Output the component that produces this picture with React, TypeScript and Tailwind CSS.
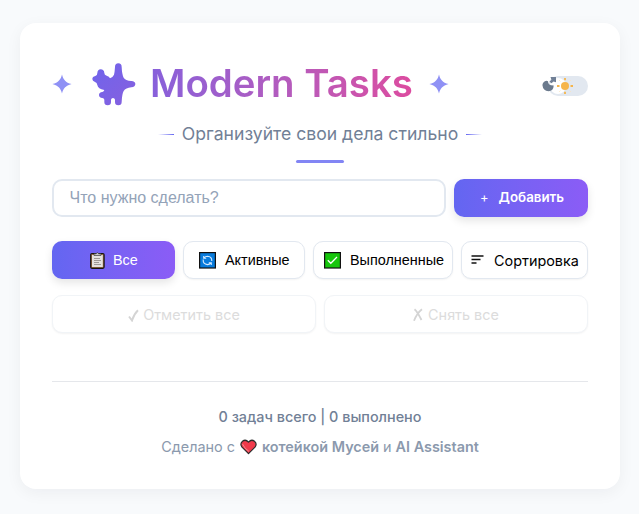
import React from 'react';

const outline = 'h-[38px] rounded-[10px] border border-[#e2e8f0] bg-white shadow-[0_1px_2px_rgba(0,0,0,0.05)] flex items-center';

function Star() {
  return (
    <svg className="h-5 w-5 shrink-0" viewBox="0 0 20 20" fill="#8f91f5">
      <path d="M10 .4C11.2 5.4 13.5 8.4 19.6 10C13.5 11.6 11.2 14.6 10 19.6C8.8 14.6 6.5 11.6 .4 10C6.5 8.4 8.8 5.4 10 .4Z" />
    </svg>
  );
}

function Sparkles() {
  return (
    <svg className="h-[43px] w-11 shrink-0" viewBox="156 38 132 129">
      <defs>
        <linearGradient id="sparkle" x1="156" y1="38" x2="288" y2="167" gradientUnits="userSpaceOnUse">
          <stop stopColor="#6f64ec" />
          <stop offset="1" stopColor="#8760de" />
        </linearGradient>
      </defs>
      <path
        fill="url(#sparkle)"
        d="M225 50Q225 39 235 39Q245 39 245 50Q246 73 251 82Q256 90 274 92Q286 93 286 101Q286 110 274 111Q257 113 251 122Q246 131 245 155Q245 165 235 165Q225 165 225 155V148Q224 143 219 143Q214 143 213 148V155Q213 165 203 165Q193 165 193 155V148Q192 144 187 143Q177 142 177 134Q177 126 187 125Q192 124 193 119Q183 118 178 114Q173 110 172 104Q171 97 165 95Q157 92 157 86Q157 79 166 77Q172 76 172 68Q173 57 182 57Q192 57 193 68Q193 75 200 76Q208 78 210 84Q219 80 222 73Q224 66 225 50Z"
      />
    </svg>
  );
}

function ThemeToggle() {
  return (
    <svg className="h-5 w-[46px]" viewBox="0 0 46 20">
      <rect x="6" width="40" height="20" rx="10" fill="#e2e8f0" />
      <circle cx="16" cy="10" r="8" fill="#fff" />
      <path d="M.4 9Q.8 5.5 4.5 4.8L6 5.2Q6.2 8.5 9 9.2L11.7 9.4Q11.5 14.9 6.5 15.2Q1 14.8 .4 9Z" fill="#6b7a8d" />
      <path d="M8.5 1H14V6.2L11.5 5.5L9.5 7.2L7.5 5.7L9.4 3.8Z" fill="#718096" />
      <circle cx="23" cy="10" r="4" fill="#f6b54b" />
      <path d="M23 2v2.2M23 15.8V18M15 10h2.5M28.5 10H31" stroke="#f6b54b" strokeWidth="1.8" />
      <path d="M17.3 4.3l1 1M27.7 14.7l1 1M17.3 15.7l1-1M27.7 5.3l1-1" stroke="#fce5bd" strokeWidth="1" />
    </svg>
  );
}

function Clipboard() {
  return (
    <svg className="h-[17px] w-[15px] shrink-0" viewBox="0 0 15 17">
      <rect x=".7" y="1.5" width="13.4" height="14.8" rx="1.2" fill="#9a6a42" stroke="#151515" strokeWidth="1.2" />
      <rect x="2" y="3" width="10.8" height="12" fill="#e4e2df" />
      <path d="M4 3.5V1.8H6Q7.4-.5 8.8 1.8H11V3.5Z" fill="#c9c9c9" stroke="#252525" strokeWidth=".6" />
      <path d="M4 6.5h6M4 8.5h7M4 10.5h5M4 12.5h7" stroke="#8b8784" strokeWidth=".8" />
    </svg>
  );
}

function Refresh() {
  return (
    <svg className="h-[17px] w-[17px] shrink-0" viewBox="0 0 17 17">
      <rect x=".6" y=".6" width="15.8" height="15.4" fill="#087bdc" stroke="#111" strokeWidth="1.2" />
      <path d="M4.2 7.5Q3.8 12.4 8.5 12.6Q10.5 12.6 12 11M9.8 10.7h2.5v2.3M12.8 9Q13 4.4 8.5 4.2Q6.5 4.2 5 5.8M7.2 6.2H4.7V3.9" fill="none" stroke="#d5eaff" strokeWidth="1.1" />
    </svg>
  );
}

function Check() {
  return (
    <svg className="h-[17px] w-[17px] shrink-0" viewBox="0 0 17 17">
      <rect x=".6" y=".6" width="15.8" height="15.4" fill="#16c60c" stroke="#111" strokeWidth="1.2" />
      <path d="M3.8 8.3l3 3L13 5" fill="none" stroke="#fff" strokeWidth="1.3" />
    </svg>
  );
}

function Heart() {
  return (
    <svg className="mx-[5px] h-4 w-[17px] shrink-0" viewBox="0 0 17 16">
      <path d="M8.5 14.6L2 8.1C-1.2 3.8 4.5-1.4 8.5 3.2C12.5-1.4 18.2 3.8 15 8.1Z" fill="#f03a4b" stroke="#2b2b2b" strokeWidth="1.2" strokeLinejoin="round" />
      <path d="M2.5 5Q4 9 9 12.5" fill="none" stroke="#f48b91" strokeWidth="1" />
    </svg>
  );
}

export default function App() {
  return (
    <main className="h-[514px] w-[639px] bg-[#f8fafc] pt-[23px] pl-5 font-['Inter',sans-serif] text-[#718096]">
      <section className="flex h-[466px] w-[600px] flex-col rounded-2xl bg-white px-8 shadow-[0_4px_16px_rgba(15,23,42,0.05)]">
        <header className="mt-9 flex h-[50px] shrink-0 items-center">
          <Star />
          <div className="ml-5"><Sparkles /></div>
          <h1 className="mb-[2px] ml-[14px] w-[265px] bg-linear-to-r from-[#8760db] to-[#dd4b9f] bg-clip-text text-[38.4px] leading-[50px] font-semibold whitespace-nowrap text-transparent">Modern Tasks</h1>
          <div className="ml-[14px]"><Star /></div>
          <div className="mt-1 ml-auto"><ThemeToggle /></div>
        </header>
        <div className="mt-3 flex h-[26px] shrink-0 items-center justify-center">
          <span className="h-px w-4 bg-linear-to-r from-transparent to-[#6366f1]" />
          <p className="mx-2 text-[17.6px] whitespace-nowrap">Организуйте свои дела стильно</p>
          <span className="h-px w-4 bg-linear-to-r from-[#6366f1] to-transparent" />
        </div>
        <div className="mx-auto mt-[13px] h-[3px] w-12 shrink-0 rounded-sm bg-[#8285f4]" />
        <div className="mt-4 flex h-[38px] shrink-0 gap-2">
          <div className="flex w-[394px] items-center rounded-[10px] border-2 border-[#e2e8f0] pl-[15.5px] font-['Liberation_Sans',sans-serif] text-base text-[#94a3b8]">Что нужно сделать?</div>
          <button className="flex w-[134px] items-center rounded-[10px] bg-linear-to-r from-[#6366f1] to-[#8b5cf6] pl-[26px] text-[13.33px] font-semibold text-white shadow-[0_4px_8px_rgba(0,0,0,0.1)]"><span className="mr-[10px] text-[13px] font-normal">+</span>Добавить</button>
        </div>
        <nav className="mt-6 flex shrink-0 gap-2 font-['Liberation_Sans',sans-serif] text-[14.4px] whitespace-nowrap text-black">
          <button className="flex h-[38px] w-[123px] items-center gap-2 rounded-[10px] bg-linear-to-r from-[#6366f1] to-[#8b5cf6] pl-[38px] text-white shadow-[0_4px_8px_rgba(0,0,0,0.1)]"><Clipboard /><span className="pt-px">Все</span></button>
          <button className={`${outline} w-[122px] gap-[9px] pl-[15px]`}><Refresh /><span className="pt-px">Активные</span></button>
          <button className={`${outline} w-[140px] gap-[9px] pl-[10px]`}><Check /><span className="pt-px">Выполненные</span></button>
          <button className={`${outline} w-[127px] gap-[10px] pl-[9px] font-['Inter',sans-serif]`}>
            <svg className="h-3 w-[13px] shrink-0" viewBox="0 0 13 12"><path d="M.5 2h12M.5 5.5h9M.5 9h5" stroke="#111" strokeWidth="1.4" /></svg><span className="pt-[2px]">Сортировка</span>
          </button>
        </nav>
        <div className="mt-4 flex shrink-0 gap-2 text-[14.4px] text-[#dcdcdc]">
          <button className={`${outline} flex-1 justify-center !border-[#f1f4f7] pt-[2px]`}>
            <svg className="mr-1 h-[13px] w-[11px]" viewBox="0 0 11 13"><path d="M1 7.5L4 11.5Q6 5 10 1.2" fill="none" stroke="#d4d4d4" strokeWidth="1.9" /></svg>Отметить все
          </button>
          <button className={`${outline} flex-1 justify-center !border-[#f1f4f7] pt-[2px]`}>
            <svg className="mr-[5px] h-[14px] w-[10px]" viewBox="0 0 10 14"><path d="M1.5 1.2Q4 3 8.5 12M9 1.2Q4 5 1 12.8" fill="none" stroke="#d4d4d4" strokeWidth="1.8" /></svg>Снять все
          </button>
        </div>
        <footer className="mt-12 flex shrink-0 flex-col items-center border-t border-[#e5e7eb] pt-[23px] whitespace-nowrap">
          <p className="text-[14.4px] leading-[23px] font-medium">0 задач всего | 0 выполнено</p>
          <p className="mt-[7px] flex h-[23px] items-center text-[14.4px] text-[#8b99ad]">Сделано с<Heart /><strong className="font-semibold">котейкой Мусей</strong><span className="mx-1">и</span><strong className="font-semibold">AI Assistant</strong></p>
        </footer>
      </section>
    </main>
  );
}
